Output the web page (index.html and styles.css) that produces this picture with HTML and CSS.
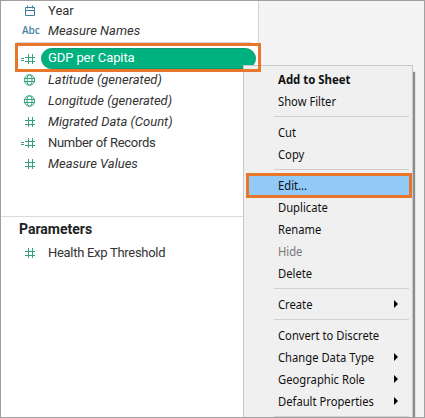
FILE: index.html
```html
<!DOCTYPE html>
<html lang="en">
<head>
<meta charset="utf-8">
<title>Data pane</title>
<link rel="stylesheet" href="styles.css">
</head>
<body>
<svg class="defs" width="0" height="0">
  <symbol id="hash" viewBox="0 0 16 12"><path d="M8.500 1v10M12.500 1v10M5 4.500h10M5 8.500h10"/></symbol>
  <symbol id="calc" viewBox="0 0 16 12"><path d="M8.500 1v10M12.500 1v10M5 4.500h10M5 8.500h10M1 5.500h3M1 7.500h3"/></symbol>
  <symbol id="globe" viewBox="0 0 16 12"><circle cx="9.500" cy="6" r="5.200"/><ellipse cx="9.500" cy="6" rx="2.500" ry="5.200"/><path d="M5 4.500h9M5 7.500h9"/></symbol>
  <symbol id="calendar" viewBox="0 0 16 12"><path d="M5.500 2.500h9v8h-9zM5.500 5.500h9M7.500 .5v3M12.500 .5v3"/></symbol>
</svg>
<main class="window">
  <section class="pane">
    <div class="fields">
      <div class="field"><svg class="icon blue"><use href="#calendar"/></svg><span>Year</span></div>
      <div class="field italic"><b class="abc">Abc</b><span>Measure Names</span></div>
      <hr class="divider">
      <div class="field"><svg class="icon"><use href="#calc"/></svg><span class="pill">GDP per Capita</span></div>
      <div class="field italic"><svg class="icon"><use href="#globe"/></svg><span>Latitude (generated)</span></div>
      <div class="field italic"><svg class="icon"><use href="#globe"/></svg><span>Longitude (generated)</span></div>
      <div class="field italic"><svg class="icon"><use href="#hash"/></svg><span>Migrated Data (Count)</span></div>
      <div class="field tight"><svg class="icon"><use href="#calc"/></svg><span>Number of Records</span></div>
      <div class="field italic"><svg class="icon"><use href="#hash"/></svg><span>Measure Values</span></div>
    </div>
    <div class="parameters">
      <h2>Parameters</h2>
      <div class="field tight"><svg class="icon"><use href="#hash"/></svg><span>Health Exp Threshold</span></div>
    </div>
  </section>
  <nav class="menu">
    <div class="item default"><span>Add to Sheet</span></div>
    <div class="item"><span>Show Filter</span></div>
    <hr>
    <div class="item"><span>Cut</span></div>
    <div class="item"><span>Copy</span></div>
    <hr>
    <div class="item selected"><span>Edit...</span></div>
    <div class="item"><span>Duplicate</span></div>
    <div class="item"><span>Rename</span></div>
    <div class="item disabled"><span>Hide</span></div>
    <div class="item"><span>Delete</span></div>
    <hr>
    <div class="item sub"><span>Create</span></div>
    <hr>
    <div class="item"><span>Convert to Discrete</span></div>
    <div class="item sub"><span>Change Data Type</span></div>
    <div class="item sub"><span>Geographic Role</span></div>
    <div class="item sub"><span>Default Properties</span></div>
    <hr>
  </nav>
  <div class="callout"></div>
</main>
</body>
</html>
```

FILE: styles.css
```css
* { box-sizing: border-box; }
body { margin: 0; }
.defs { position: absolute; }
.window {
  position: relative;
  width: 425px;
  height: 418px;
  overflow: hidden;
  border: 1px solid #a0a0a0;
  background: #f4f4f4;
}
.pane {
  width: 258px;
  height: 416px;
  background: #fff;
  border-right: 1px solid #d4d4d4;
  font: 13px/21px Roboto, "Open Sans", sans-serif;
  color: #333;
}
.fields { height: 216px; border-bottom: 1px solid #dcdcdc; }
.field { display: flex; align-items: center; height: 21px; padding-left: 19px; white-space: nowrap; }
.field:first-child { height: 19px; }
.italic { font-style: italic; }
.tight { letter-spacing: -.29px; }
.icon { width: 16px; height: 12px; margin-right: 12px; flex: none; fill: none; stroke: #35a37a; stroke-width: 1; }
.blue { stroke: #3f7f9b; }
.abc { width: 28px; padding-left: 2px; font: 600 10px/21px "Open Sans", sans-serif; color: #4683a0; }
.divider { width: 235px; height: 1px; margin: 1px 0 5px 15px; border: 0; background: #d8d8d8; }
.pill {
  align-self: flex-start;
  width: 215px;
  height: 21px;
  margin-left: -7px;
  padding-left: 6px;
  border: 1px solid #0c9c70;
  border-radius: 11px;
  background: #00b180;
  color: #fff;
  line-height: 18px;
  letter-spacing: -.1px;
}
.parameters h2 { margin: 2px 0 0 18px; font: bold 14px/21px Roboto, "Open Sans", sans-serif; color: #222; }
.parameters .field { margin-top: 2px; }
.menu {
  position: absolute;
  left: 242px;
  top: 64px;
  width: 170px;
  height: 370px;
  padding: 3px 3px 0 2px;
  border: 1px solid #c8c8c8;
  background: #f0f0f0;
  box-shadow: 3px 6px 1px -1px #8c8c8c;
  font: 12px/22px "Noto Sans", sans-serif;
  color: #111;
}
.item { display: flex; align-items: center; justify-content: space-between; height: 22px; padding: 0 11px 0 32px; white-space: nowrap; }
.item span { transform-origin: left center; transform: scaleX(.935); }
.default { font-weight: bold; }
.default span { transform: scaleX(.95); }
.disabled { color: #777; }
.sub::after { content: ""; margin-top: -2px; border: 4px solid transparent; border-left-color: #000; border-right: 0; }
.menu hr { height: 1px; margin: 3px 0 5px 28px; border: 0; background: #d0d0d0; }
.selected { position: relative; background: #91c9f7; }
.selected::after { content: ""; position: absolute; inset: -2px -3px -1px 0; border: 3px solid #e8762d; }
.callout { position: absolute; left: 14px; top: 42px; width: 246px; height: 29px; border: 3px solid #e8762d; }
```
